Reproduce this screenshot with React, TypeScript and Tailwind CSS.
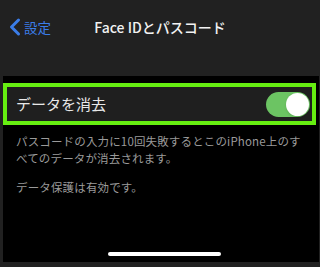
import { ChevronLeft } from 'lucide-react'

const font = {
    fontFamily: '"Noto Sans CJK JP", "Noto Sans", sans-serif'
}

export default function App() {
    return (
        <div className="flex h-[267px] w-[320px] flex-col bg-[#212121]" style={font}>
            {/* nav bar */}
            <div className="relative flex h-[76px] shrink-0 items-start pt-[13px]">
                <div className="flex items-center pl-[1px] text-[#3b7de8]">
                    <ChevronLeft className="h-[28px] w-[28px]" strokeWidth={2.6} />
                    <span className="ml-[-5px] text-[13.5px] leading-[28px]">設定</span>
                </div>
                <div className="absolute left-0 right-0 top-[16px] text-center text-[14px] font-medium leading-[22px] text-[#f2f2f2]">
                    Face IDとパスコード
                </div>
            </div>

            {/* content */}
            <div className="mb-[5px] ml-[3px] mr-[1px] flex flex-1 flex-col bg-black pt-[7px]">
                <div className="flex h-[42px] w-[313px] items-center justify-between border-[4px] border-[#66ee11] bg-[#1f1f1f] pl-[9px] pr-[2px]">
                    <span className="text-[15px] leading-[22px] text-[#e8e8e8]">データを消去</span>
                    <div className="flex h-[25px] w-[44px] items-center justify-end rounded-full bg-[#6cc463] pr-[1px]">
                        <div className="h-[23px] w-[23px] rounded-full bg-white shadow" />
                    </div>
                </div>
                <p className="mt-[8px] pl-[13px] pr-[2px] text-[11.5px] leading-[16.5px] tracking-[0.15px] text-[#9a9a9a]">
                    パスコードの入力に10回失敗するとこのiPhone上のす
                    <br />
                    べてのデータが消去されます。
                </p>
                <p className="mt-[13px] pl-[13px] text-[11.5px] leading-[16.5px] tracking-[0.15px] text-[#9a9a9a]">
                    データ保護は有効です。
                </p>
                <div className="mt-auto mb-[6px] flex justify-center">
                    <div className="ml-[6px] h-[4px] w-[113px] rounded-full bg-white" />
                </div>
            </div>
        </div>
    )
}
